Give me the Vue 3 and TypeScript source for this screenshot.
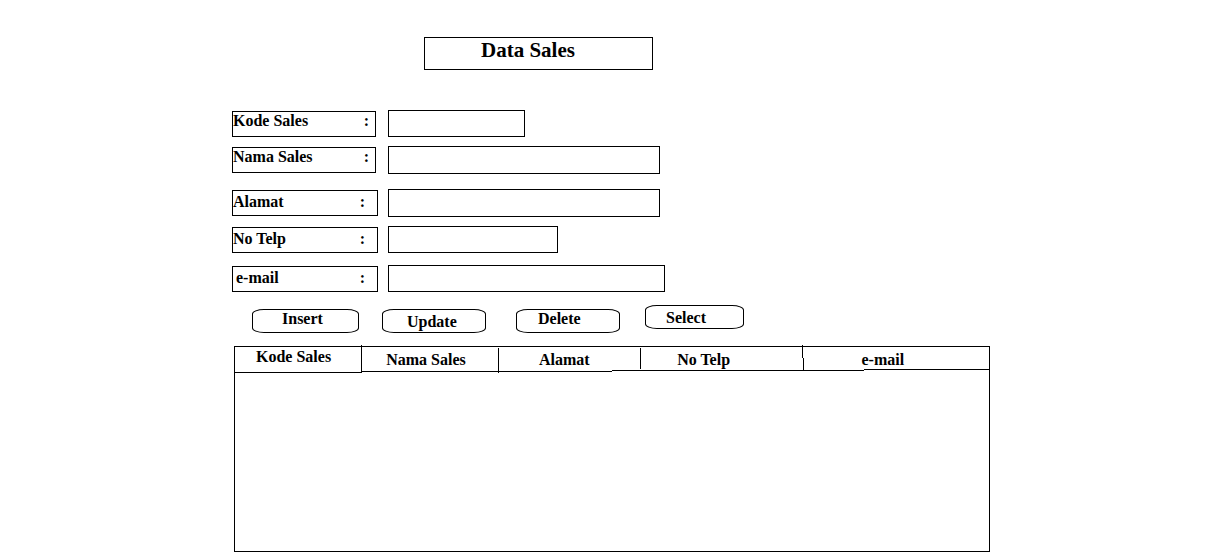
<script setup lang="ts">
import { reactive, ref } from 'vue'

type FieldKey = 'kode' | 'nama' | 'alamat' | 'telp' | 'email'

interface Field {
  key: FieldKey
  label: string
}

const fields: Field[] = [
  { key: 'kode', label: 'Kode Sales' },
  { key: 'nama', label: 'Nama Sales' },
  { key: 'alamat', label: 'Alamat' },
  { key: 'telp', label: 'No Telp' },
  { key: 'email', label: 'e-mail' },
]

const actions: string[] = ['Insert', 'Update', 'Delete', 'Select']

const form = reactive<Record<FieldKey, string>>({
  kode: '',
  nama: '',
  alamat: '',
  telp: '',
  email: '',
})

const rows = ref<Record<FieldKey, string>[]>([])
</script>

<template>
  <main class="page">
    <h1 class="title">Data Sales</h1>

    <form @submit.prevent>
      <div v-for="f in fields" :key="f.key" class="field" :class="f.key">
        <label :for="f.key"><span>{{ f.label }}</span><span>:</span></label>
        <input :id="f.key" v-model="form[f.key]" type="text" />
      </div>

      <div class="actions">
        <button v-for="a in actions" :key="a" type="button" :class="a.toLowerCase()">{{ a }}</button>
      </div>
    </form>

    <div class="list">
      <svg class="rules" viewBox="0 0 756 28" preserveAspectRatio="none" aria-hidden="true">
        <path d="M127.5 0V28M264.5 3V28M406.5 3V24M568.5 0V13M569.5 13V25" />
        <path d="M0 27.5H127M127 26.5H378M378 25.5H630M630 24.5H756" />
      </svg>
      <table>
        <thead>
          <tr>
            <th v-for="f in fields" :key="f.key" scope="col" :class="'col-' + f.key">{{ f.label }}</th>
          </tr>
        </thead>
        <tbody>
          <tr v-for="(r, i) in rows" :key="i">
            <td v-for="f in fields" :key="f.key">{{ r[f.key] }}</td>
          </tr>
        </tbody>
      </table>
    </div>
  </main>
</template>

<style>
body {
  margin: 0;
  background: #fff;
}
</style>

<style scoped>
.page,
.page * {
  box-sizing: border-box;
}

.page {
  padding: 37px max(16px, calc(50% - 379px)) 5px;
  font: bold 16px/18px "Liberation Serif", "Times New Roman", serif;
  color: #000;
}

.title {
  width: 229px;
  margin: 0 0 40px 192px;
  padding: 0 0 7px 56px;
  border: 1px solid #000;
  font-size: 21px;
  line-height: 24px;
}

.field {
  display: flex;
  align-items: center;
  gap: 10px;
}

label {
  display: flex;
  flex: none;
  justify-content: space-between;
  width: 146px;
  height: 26px;
  padding: 2px 12px 0 0;
  border: 1px solid #000;
}

.kode label,
.nama label {
  width: 144px;
  padding: 0 6px 0 0;
}

.kode,
.nama {
  gap: 12px;
}

.nama,
.telp {
  margin-top: 9px;
}

.alamat {
  margin-top: 15px;
}

.email {
  margin-top: 12px;
}

.email label {
  padding-left: 3px;
}

input {
  width: 272px;
  min-width: 0;
  height: 28px;
  margin: 0;
  padding: 0 4px;
  border: 1px solid #000;
  border-radius: 0;
  background: #fff;
  font: inherit;
  color: inherit;
}

.kode input,
.telp input,
.email input {
  height: 27px;
}

.kode input {
  width: 137px;
}

.telp input {
  width: 170px;
}

.email input {
  width: 277px;
}

.actions {
  display: grid;
  grid-template-columns: 130px 134px 129px 100px;
  align-items: end;
  height: 28px;
  margin: 13px 0 0 20px;
}

button {
  width: 104px;
  height: 24px;
  padding: 0 0 4px 21px;
  border: 1px solid #000;
  border-radius: 12px / 5px;
  background: #fff;
  font: inherit;
  color: inherit;
  text-align: left;
}

.insert {
  width: 107px;
  padding-left: 29px;
}

.update {
  padding: 3px 0 1px 24px;
}

.select {
  align-self: start;
  width: 99px;
  padding: 3px 0 1px 20px;
}

.list {
  position: relative;
  min-height: 206px;
  margin: 13px 0 0 2px;
  border: 1px solid #000;
}

/* Header rules are slightly stepped, so they are drawn over the table. */
.rules {
  position: absolute;
  top: -2px;
  left: -1px;
  width: calc(100% + 2px);
  height: 28px;
  fill: none;
  stroke: #000;
  stroke-width: 1;
  shape-rendering: crispEdges;
  pointer-events: none;
}

table {
  width: 100%;
  border-collapse: collapse;
  table-layout: fixed;
}

th {
  height: 26px;
  padding: 4px 0 0;
  text-align: left;
  vertical-align: top;
}

td {
  padding: 4px;
}

.col-kode {
  width: 17%;
  padding: 1px 0 0 21px;
}

.col-nama {
  width: 18%;
  padding-left: 23px;
}

.col-alamat {
  width: 19%;
  padding-left: 40px;
}

.col-telp {
  width: 21%;
  padding-left: 35px;
}

.col-email {
  width: 25%;
  padding-left: 61px;
}
</style>
